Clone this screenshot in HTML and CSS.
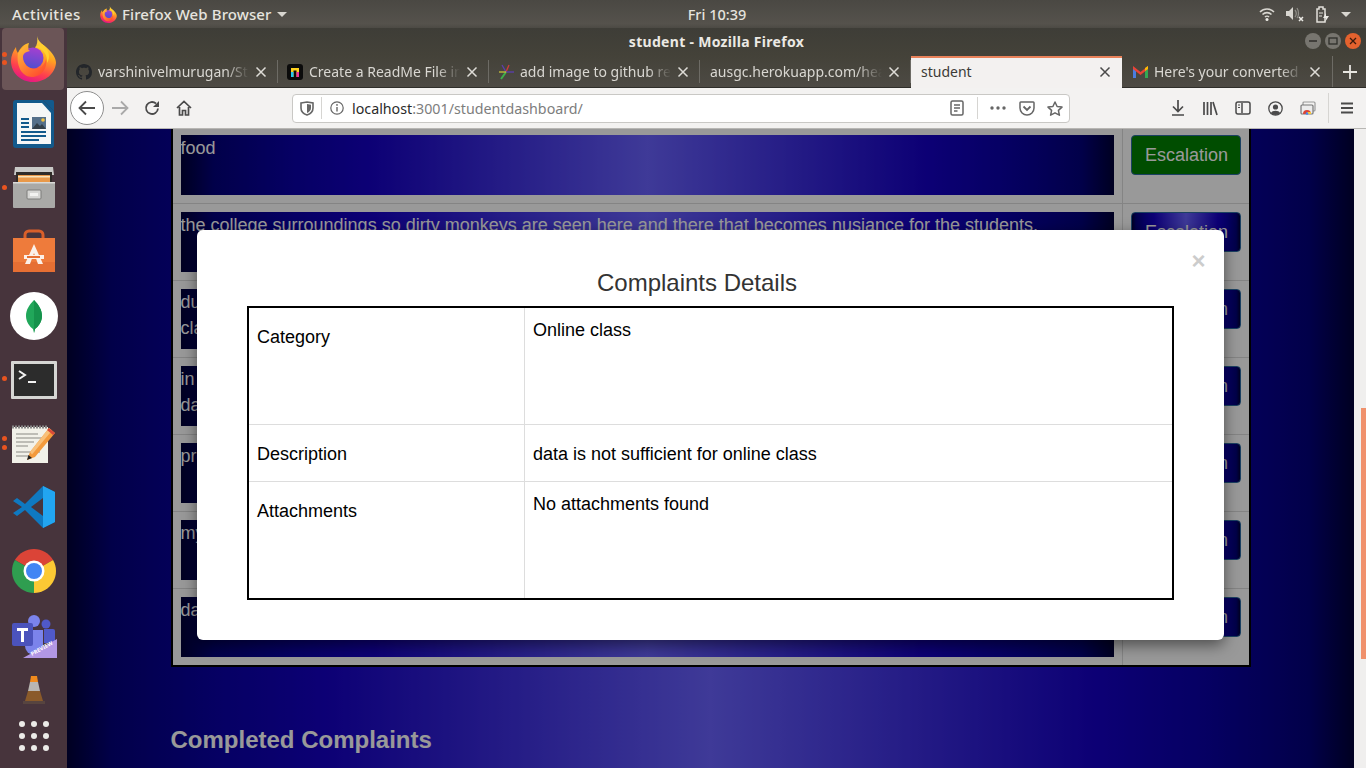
FILE: index.html
```html
<!DOCTYPE html>
<html lang="en">
<head>
    <meta charset="UTF-8">
    <title>student - Mozilla Firefox</title>
    <link rel="stylesheet" href="styles.css">
</head>
<body>
    <svg class="defs" width="0" height="0">
        <defs>
            <linearGradient id="foxOuter" x1="0.7" y1="0" x2="0.35" y2="1">
                <stop offset="0" stop-color="#ffe847"/>
                <stop offset="0.4" stop-color="#ffa51f"/>
                <stop offset="0.75" stop-color="#ff3f4e"/>
                <stop offset="1" stop-color="#e31587"/>
            </linearGradient>
            <linearGradient id="foxGlobe" x1="0.6" y1="0" x2="0.4" y2="1">
                <stop offset="0" stop-color="#a63fd0"/>
                <stop offset="1" stop-color="#4f4fd0"/>
            </linearGradient>
            <linearGradient id="foxFlame" x1="0" y1="0" x2="0.7" y2="1">
                <stop offset="0" stop-color="#ffc23a"/>
                <stop offset="1" stop-color="#ff4f2e"/>
            </linearGradient>
            <symbol id="firefox" viewBox="0 0 45 46">
                <path fill="url(#foxOuter)" d="M26 0C27 5 31 8 35 11 41 16 45 22 45 27 44 38 34 46 22 46 10 46 0 37 0 25 0 20 2 15 5 11 5 14 6 16 7 17 9 12 13 8 18 7 17 10 17 12 18 13 20 12 22 12 24 12 26 9 27 5 26 0Z"/>
                <circle cx="22" cy="22" r="10.500" fill="url(#foxGlobe)"/>
                <path fill="url(#foxFlame)" d="M7 17C9 13 13 10 17 9 16 12 17 14 19 15 14 16 12 18 12 21 12 28 18 33 24 33 30 33 34 28 35 23 37 32 30 41 21 41 11 41 5 30 7 17Z"/>
                <path fill="#ffd02e" d="M24 11C32 12 37 19 36 27 40 21 38 13 31 8 29 9 27 10 24 11Z"/>
            </symbol>
            <symbol id="ghmark" viewBox="0 0 16 16">
                <path fill-rule="evenodd" d="M8 0C3.58 0 0 3.58 0 8c0 3.54 2.29 6.53 5.47 7.59.4.07.55-.17.55-.38 0-.19-.01-.82-.01-1.49-2.01.37-2.53-.49-2.69-.94-.09-.23-.48-.94-.82-1.13-.28-.15-.68-.52-.01-.53.63-.01 1.08.58 1.23.82.72 1.21 1.87.87 2.33.66.07-.52.28-.87.51-1.07-1.78-.2-3.64-.89-3.64-3.95 0-.87.31-1.59.82-2.15-.08-.2-.36-1.02.08-2.12 0 0 .67-.21 2.2.82.64-.18 1.32-.27 2-.27.68 0 1.36.09 2 .27 1.53-1.04 2.2-.82 2.2-.82.44 1.1.16 1.92.08 2.12.51.56.82 1.27.82 2.15 0 3.07-1.87 3.75-3.65 3.95.29.25.54.73.54 1.48 0 1.07-.01 1.93-.01 2.2 0 .21.15.46.55.38A8.013 8.013 0 0016 8c0-4.42-3.58-8-8-8z"/>
            </symbol>
            <symbol id="x" viewBox="0 0 12 12">
                <path d="M1.500 1.500l9 9M10.500 1.500l-9 9" fill="none" stroke="currentColor" stroke-width="1.500"/>
            </symbol>
        </defs>
    </svg>

    <div class="topbar">
        <div class="top-left">
            <span class="activities">Activities</span>
            <svg class="top-fox" width="17" height="17"><use href="#firefox"/></svg>
            <span class="app-name">Firefox Web Browser</span>
            <span class="caret"></span>
        </div>
        <div class="clock">Fri 10:39</div>
        <div class="top-right">
            <svg class="tray" width="16" height="16" viewBox="0 0 16 16"><path d="M1 6c4-4 10-4 14 0M3.500 8.500c2.500-2.500 6.500-2.500 9 0M6 11c1-1 3-1 4 0" fill="none" stroke="#d8d6d0" stroke-width="1.600"/><circle cx="8" cy="13.500" r="1.500" fill="#ecebe6"/></svg>
            <svg class="tray tray-near" width="20" height="16" viewBox="0 0 20 16"><path d="M1 5h3l4-4v13l-4-4H1z" fill="#d8d6d0"/><path d="M10 4c1.500 2 1.500 5 0 7M12 2c2 3 2 8 0 10" fill="none" stroke="#8e8c86" stroke-width="1.300"/><path d="M14 11l4 4M18 11l-4 4" stroke="#ecebe6" stroke-width="1.500"/></svg>
            <svg class="tray" width="18" height="17" viewBox="0 0 18 17"><path d="M4 3h2V1h4v2h2v13H4z" fill="none" stroke="#e2e0da" stroke-width="1.500"/><path d="M6 7h4M6 10h3" stroke="#e2e0da" stroke-width="1.200"/><path d="M13 7l-3 5h3l-1 4 4-6h-3z" fill="#ecebe6"/></svg>
            <span class="caret"></span>
        </div>
    </div>

    <div class="desktop">
        <div class="dock">
            <div class="dock-item active">
                <span class="pip pip-a"></span><span class="pip pip-b"></span>
                <svg width="45" height="46"><use href="#firefox"/></svg>
            </div>
            <div class="dock-item">
                <svg width="42" height="50" viewBox="0 0 42 50">
                    <path d="M3 1h27l11 11v34a3 3 0 0 1-3 3H3a3 3 0 0 1-3-3V4a3 3 0 0 1 3-3z" fill="#135a8c"/>
                    <path d="M4 4h25l9 10v31H4z" fill="#f6f7f7"/>
                    <path d="M30 1h9a2 2 0 0 1 2 2v9z" fill="#135a8c"/>
                    <path d="M8 20h8M8 24h8M8 28h8M8 33h25M8 37h25M8 41h18" stroke="#135a8c" stroke-width="2"/>
                    <rect x="19" y="18" width="14" height="12" fill="#55708a"/>
                    <path d="M19 30l5-6 3 3 2-2 4 5z" fill="#33404a"/>
                    <circle cx="30" cy="21" r="1.800" fill="#f3c342"/>
                </svg>
            </div>
            <div class="dock-item nudge-up">
                <span class="pip pip-one"></span>
                <svg width="42" height="44" viewBox="0 0 42 44">
                    <path d="M2 2h38l1 8H1z" fill="#c9c9c7"/>
                    <rect x="3" y="7" width="36" height="12" fill="#2f2b28"/>
                    <rect x="5" y="10" width="32" height="8" fill="#e9994a"/>
                    <rect x="5" y="11" width="32" height="1.500" fill="#f8e2b8"/>
                    <path d="M0 17h42v25a1 1 0 0 1-1 1H1a1 1 0 0 1-1-1z" fill="#a9a9a7"/>
                    <rect x="0" y="17" width="42" height="1.500" fill="#dadad8"/>
                    <rect x="14" y="25" width="14" height="9" rx="1" fill="#d6d6d4" stroke="#7c7c7a"/>
                    <rect x="17" y="28" width="8" height="3" fill="#f2f2f0"/>
                </svg>
            </div>
            <div class="dock-item nudge-up">
                <svg width="42" height="44" viewBox="0 0 42 44">
                    <path d="M12 11V6a4 4 0 0 1 4-4h10a4 4 0 0 1 4 4v5" fill="none" stroke="#d95f2a" stroke-width="3"/>
                    <rect x="0" y="9" width="42" height="34" fill="#ee7b3b"/>
                    <rect x="0" y="33" width="42" height="10" fill="#e66f33"/>
                    <path d="M21 15l9 20h-5l-4-11-4 11h-5z" fill="#fbf0e8"/>
                    <rect x="11" y="26" width="20" height="4" fill="#fbf0e8"/>
                    <rect x="14" y="27" width="13" height="2" fill="#e66f33"/>
                </svg>
            </div>
            <div class="dock-item">
                <svg width="48" height="48" viewBox="0 0 48 48">
                    <circle cx="24" cy="24" r="24" fill="#fff"/>
                    <path d="M24 8c5 5 8 10 8 16 0 6-4 11-7 13l-1 4-1-4c-3-2-7-7-7-13 0-6 3-11 8-16z" fill="#21a75a"/>
                    <path d="M24 8c5 5 8 10 8 16 0 6-4 11-7 13l-1 4z" fill="#16924c"/>
                </svg>
            </div>
            <div class="dock-item">
                <span class="pip pip-term"></span>
                <svg width="46" height="38" viewBox="0 0 46 38">
                    <rect width="46" height="38" rx="1" fill="#d6d6d4"/>
                    <rect x="3" y="3" width="40" height="32" fill="#2c2c2c"/>
                    <path d="M8 10l6 4-6 4" fill="none" stroke="#f2f2f2" stroke-width="2"/>
                    <rect x="17" y="20" width="8" height="2" fill="#f2f2f2"/>
                </svg>
            </div>
            <div class="dock-item">
                <span class="pip pip-g1"></span><span class="pip pip-g2"></span>
                <svg width="46" height="38" viewBox="0 0 46 38">
                    <rect x="1" y="2" width="36" height="36" fill="#f2f1e9"/>
                    <path d="M1 2h36" stroke="#888" stroke-width="3" stroke-dasharray="2 1"/>
                    <path d="M5 9h22M5 13h26M5 17h18M5 21h12M5 27h24M5 31h16" stroke="#8a8a84" stroke-width="1.200"/>
                    <path d="M38 3l6 5-20 24-8 3 3-8z" fill="#f39a3c"/>
                    <path d="M38 3l3 2.500-20 24L19 27z" fill="#f8c07a"/>
                    <path d="M16 35l1.500-5 3.500 3z" fill="#222"/>
                    <path d="M38 3l6 5-2 2-6-5z" fill="#d84a3a"/>
                </svg>
            </div>
            <div class="dock-item nudge-up">
                <svg width="42" height="42" viewBox="0 0 42 42">
                    <path d="M30 0l12 6v30l-12 6L12 24l-8 6-4-3 9-6-9-6 4-3 8 6z" fill="#0f79c1"/>
                    <path d="M30 0l12 6v30l-12 6z" fill="#22a5f1"/>
                    <path d="M30 12v18l-12-9z" fill="#47343c"/>
                </svg>
            </div>
            <div class="dock-item nudge-up-more">
                <svg width="44" height="44" viewBox="0 0 44 44">
                    <path d="M22 22L2.950 11A22 22 0 0 1 41.050 11z" fill="#db4437"/>
                    <path d="M22 22L41.050 11A22 22 0 0 1 22 44z" fill="#fcc934"/>
                    <path d="M22 22L22 44A22 22 0 0 1 2.950 11z" fill="#2f9e50"/>
                    <circle cx="22" cy="22" r="10.500" fill="#fff"/>
                    <circle cx="22" cy="22" r="8" fill="#4285f4"/>
                </svg>
            </div>
            <div class="dock-item nudge-down">
                <svg width="46" height="44" viewBox="0 0 46 44">
                    <circle cx="23" cy="6" r="6" fill="#7b83eb"/>
                    <circle cx="35" cy="9" r="4.500" fill="#5059c9"/>
                    <path d="M14 15h18v16a9 9 0 0 1-18 0z" fill="#7b83eb"/>
                    <path d="M33 14h9a2 2 0 0 1 2 2v12H33z" fill="#5059c9"/>
                    <rect x="1" y="8" width="21" height="23" rx="2" fill="#4b53bc"/>
                    <path d="M6 13h11v3h-4v11h-3V16H6z" fill="#fff"/>
                    <path d="M12 43L46 24v19z" fill="#b297e4"/>
                    <text x="21" y="41" class="preview" transform="rotate(-29 21 41)">PREVIEW</text>
                </svg>
            </div>
            <div class="dock-item dock-small">
                <svg width="22" height="30" viewBox="0 0 22 30">
                    <path d="M8 1h6l1 6H7z" fill="#f08a1d"/>
                    <path d="M7 7h8l2 9H5z" fill="#b9b6b2"/>
                    <path d="M5 16h12l3 10H2z" fill="#8a5a2a"/>
                    <rect x="0" y="26" width="22" height="3" fill="#57443f"/>
                </svg>
            </div>
            <div class="dock-item dock-apps">
                <div class="apps-grid">
                    <i></i><i></i><i></i><i></i><i></i><i></i><i></i><i></i><i></i>
                </div>
            </div>
        </div>

        <div class="browser">
            <div class="titlebar">
                <span class="win-title">student - Mozilla Firefox</span>
                <div class="win-btns">
                    <span class="win-btn"><svg width="16" height="16" viewBox="0 0 16 16"><path d="M4 8h8" stroke="#2f2e2a" stroke-width="1.500"/></svg></span>
                    <span class="win-btn"><svg width="16" height="16" viewBox="0 0 16 16"><rect x="4" y="5" width="8" height="6" fill="none" stroke="#2f2e2a" stroke-width="1.300"/></svg></span>
                    <span class="win-btn close-btn"><svg width="16" height="16" viewBox="0 0 16 16"><path d="M5 5l6 6M11 5l-6 6" stroke="#3a1a0c" stroke-width="1.300"/></svg></span>
                </div>
            </div>

            <div class="tabs">
                <div class="tab">
                    <svg class="favicon gh" width="16" height="16"><use href="#ghmark"/></svg>
                    <span class="tab-title">varshinivelmurugan/Student</span>
                    <svg class="tab-x" width="12" height="12"><use href="#x"/></svg>
                </div>
                <div class="tab">
                    <svg class="favicon" width="16" height="16" viewBox="0 0 16 16"><rect width="16" height="16" rx="3" fill="#0b0b0b"/><path d="M4 13V4h8v9h-2.500V6.500h-3V13z" fill="#ffd21f"/><path d="M4 13V8h2.500v5z" fill="#25c6f0"/><path d="M9.500 13V8H12v5z" fill="#f0359a"/></svg>
                    <span class="tab-title">Create a ReadMe File in</span>
                    <svg class="tab-x" width="12" height="12"><use href="#x"/></svg>
                </div>
                <div class="tab">
                    <svg class="favicon" width="16" height="16" viewBox="0 0 16 16"><path d="M8 8L4 1" stroke="#5c3fb0" stroke-width="1.300"/><path d="M8 8l3-7" stroke="#d13b3b" stroke-width="1.300"/><path d="M8 8h8" stroke="#5c3fb0" stroke-width="1.300"/><path d="M8 8L3 15" stroke="#3fb04a" stroke-width="2"/><path d="M8 8H1" stroke="#c7c23a" stroke-width="1.300"/></svg>
                    <span class="tab-title">add image to github readme</span>
                    <svg class="tab-x" width="12" height="12"><use href="#x"/></svg>
                </div>
                <div class="tab no-icon">
                    <span class="tab-title">ausgc.herokuapp.com/health</span>
                    <svg class="tab-x" width="12" height="12"><use href="#x"/></svg>
                </div>
                <div class="tab no-icon tab-active">
                    <span class="tab-title">student</span>
                    <svg class="tab-x" width="12" height="12"><use href="#x"/></svg>
                </div>
                <div class="tab tab-last">
                    <svg class="favicon" width="15" height="12" viewBox="0 0 15 12"><path d="M0 2v10h3V5z" fill="#4a7de0"/><path d="M12 5v7h3V2z" fill="#34a853"/><path d="M0 0l7.500 6L15 0v3l-7.500 6L0 3z" fill="#ea4335"/><path d="M12 2l3-2v3l-3 2z" fill="#fbbc04"/></svg>
                    <span class="tab-title">Here's your converted file</span>
                    <svg class="tab-x" width="12" height="12"><use href="#x"/></svg>
                </div>
                <div class="new-tab">
                    <svg width="14" height="14" viewBox="0 0 14 14"><path d="M7 0v14M0 7h14" stroke="#e8e6e1" stroke-width="1.800"/></svg>
                </div>
            </div>

            <div class="toolbar">
                <span class="back-btn">
                    <svg width="18" height="16" viewBox="0 0 18 16"><path d="M17 8H2M8 1.500L1.500 8 8 14.500" fill="none" stroke="#4a4a4a" stroke-width="1.800"/></svg>
                </span>
                <svg class="forward" width="18" height="16" viewBox="0 0 18 16"><path d="M1 8h15M10 1.500L16.500 8 10 14.500" fill="none" stroke="#a9a9a9" stroke-width="1.800"/></svg>
                <svg class="reload" width="16" height="16" viewBox="0 0 16 16"><path d="M14 8.500A6 6 0 1 1 12 3.500" fill="none" stroke="#4a4a4a" stroke-width="1.800"/><path d="M15 1v6H9z" fill="#4a4a4a"/></svg>
                <svg class="home" width="16" height="16" viewBox="0 0 16 16"><path d="M1 8l7-6.500L15 8M3.500 7v8h3v-4.500h3V15h3V7" fill="none" stroke="#4a4a4a" stroke-width="1.700"/></svg>

                <div class="urlbar">
                    <svg class="shield" width="14" height="15" viewBox="0 0 14 15"><path d="M1 2l6-1 6 1v5c0 4-3 6-6 7-3-1-6-3-6-7z" fill="none" stroke="#666" stroke-width="1.600"/><path d="M7 3l4 .700V7c0 2.500-2 4-4 5z" fill="#666"/></svg>
                    <span class="url-sep"></span>
                    <svg class="info" width="14" height="14" viewBox="0 0 14 14"><circle cx="7" cy="7" r="6.200" fill="none" stroke="#666" stroke-width="1.200"/><path d="M7 6v4.500" stroke="#666" stroke-width="1.400"/><circle cx="7" cy="3.900" r="0.900" fill="#666"/></svg>
                    <span class="url-text">localhost<span class="url-dim">:3001/studentdashboard/</span></span>
                    <svg class="reader" width="14" height="16" viewBox="0 0 14 16"><rect x="1" y="1" width="12" height="14" rx="1.500" fill="none" stroke="#666" stroke-width="1.500"/><path d="M4 5h6M4 8h6M4 11h3.500" stroke="#666" stroke-width="1.300"/></svg>
                    <span class="url-sep url-sep-r"></span>
                    <svg class="dots" width="16" height="4" viewBox="0 0 16 4"><circle cx="2" cy="2" r="1.700" fill="#666"/><circle cx="8" cy="2" r="1.700" fill="#666"/><circle cx="14" cy="2" r="1.700" fill="#666"/></svg>
                    <svg class="pocket" width="16" height="15" viewBox="0 0 16 15"><path d="M1.800 1h12.400a.8.800 0 0 1 .8.800V7a7 7 0 0 1-14 0V1.800a.8.800 0 0 1 .8-.800z" fill="none" stroke="#666" stroke-width="1.500"/><path d="M4.500 5.500L8 9l3.500-3.500" fill="none" stroke="#666" stroke-width="1.800"/></svg>
                    <svg class="star" width="16" height="15" viewBox="0 0 16 15"><path d="M8 1l2.100 4.500 4.900.6-3.600 3.300 1 4.800L8 11.800l-4.400 2.400 1-4.800L1 6.100l4.900-.6z" fill="none" stroke="#666" stroke-width="1.500" stroke-linejoin="round"/></svg>
                </div>

                <div class="tools">
                    <svg width="14" height="16" viewBox="0 0 14 16"><path d="M7 0v11M2 6.500L7 11.500l5-5M1 15h12" fill="none" stroke="#4a4a4a" stroke-width="1.700"/></svg>
                    <svg width="16" height="16" viewBox="0 0 16 16"><path d="M2 2v13M5.500 2v13M9 2v13M11 2l4 13" fill="none" stroke="#4a4a4a" stroke-width="1.700"/></svg>
                    <svg width="16" height="14" viewBox="0 0 16 14"><rect x="1" y="1" width="14" height="12" rx="2" fill="none" stroke="#4a4a4a" stroke-width="1.500"/><path d="M7 2v10" stroke="#4a4a4a" stroke-width="1.500"/><path d="M3 4h2M3 6.500h2" stroke="#4a4a4a" stroke-width="1"/></svg>
                    <svg width="15" height="15" viewBox="0 0 15 15"><circle cx="7.500" cy="7.500" r="6.700" fill="none" stroke="#4a4a4a" stroke-width="1.300"/><circle cx="7.500" cy="6" r="2.600" fill="#4a4a4a"/><path d="M3 12c1-3 8-3 9 0a6 6 0 0 1-9 0z" fill="#4a4a4a"/></svg>
                    <svg width="16" height="14" viewBox="0 0 16 14"><rect x="3" y="1" width="12" height="9" rx="1" fill="none" stroke="#9a9a9a" stroke-width="1.200"/><rect x="1" y="4" width="12" height="9" rx="1" fill="#ececec" stroke="#777" stroke-width="1.200"/><path d="M3 13a4 4 0 0 1 8 0z" fill="#db4437"/><path d="M7 13V11h4v2z" fill="#fcc934"/><circle cx="7" cy="12.500" r="1.300" fill="#4285f4"/></svg>
                    <span class="tool-sep"></span>
                    <svg class="menu" width="14" height="12" viewBox="0 0 14 12"><path d="M1 1.500h12M1 6h12M1 10.500h12" stroke="#4a4a4a" stroke-width="1.800"/></svg>
                </div>
            </div>

            <div class="viewport">
                <div class="page">
                    <div class="wrap">
                        <table class="list">
                            <tr>
                                <td class="desc"><div class="grad">food</div></td>
                                <td class="act"><button class="esc esc-done">Escalation</button></td>
                            </tr>
                            <tr>
                                <td class="desc"><div class="grad">the college surroundings so dirty monkeys are seen here and there that becomes nusiance for the students.</div></td>
                                <td class="act"><button class="esc">Escalation</button></td>
                            </tr>
                            <tr>
                                <td class="desc"><div class="grad">dur<br>cla</div></td>
                                <td class="act"><button class="esc">Escalation</button></td>
                            </tr>
                            <tr>
                                <td class="desc"><div class="grad">in t<br>dat</div></td>
                                <td class="act"><button class="esc">Escalation</button></td>
                            </tr>
                            <tr>
                                <td class="desc"><div class="grad">pro</div></td>
                                <td class="act"><button class="esc">Escalation</button></td>
                            </tr>
                            <tr>
                                <td class="desc"><div class="grad">my c</div></td>
                                <td class="act"><button class="esc">Escalation</button></td>
                            </tr>
                            <tr>
                                <td class="desc"><div class="grad">dat</div></td>
                                <td class="act"><button class="esc">Escalation</button></td>
                            </tr>
                        </table>
                        <h2 class="completed">Completed Complaints</h2>
                    </div>
                </div>

                <div class="backdrop"></div>

                <div class="modal">
                    <div class="modal-head">
                        <h4 class="modal-title">Complaints Details</h4>
                        <span class="modal-close">×</span>
                    </div>
                    <table class="details">
                        <tr class="tall">
                            <td class="label">Category</td>
                            <td class="value">Online class</td>
                        </tr>
                        <tr class="short">
                            <td class="label">Description</td>
                            <td class="value mid">data is not sufficient for online class</td>
                        </tr>
                        <tr class="tall">
                            <td class="label">Attachments</td>
                            <td class="value">No attachments found</td>
                        </tr>
                    </table>
                </div>

                <div class="scrollbar"><div class="thumb"></div></div>
            </div>
        </div>
    </div>
</body>
</html>
```

FILE: styles.css
```css
:root{
    /* page gradient, undimmed (the modal backdrop darkens it) */
    --night: linear-gradient(to right, #000038, #03007b 3.500%, #0a00a7 12%, #1500c3 20%, #6961fd 50%, #1500c3 80%, #0a00a7 88%, #03007b 96.500%, #000038);
}
*{box-sizing: border-box;}
html,body{margin: 0; height: 100%; overflow: hidden;}
body{
    width: 1366px;
    height: 768px;
    display: flex;
    flex-direction: column;
    font-family: "Liberation Sans", Arial, sans-serif;
    background-color: #3c3b37;
}
.defs{position: absolute;}

/* ubuntu top bar */
.topbar{
    height: 28px;
    flex: none;
    display: grid;
    grid-template-columns: 368px 1fr 300px;
    align-items: center;
    background: linear-gradient(to bottom, #4a4843, #55524c 85%, #4c4a44);
    color: #e6e4df;
    font-family: "Noto Sans", sans-serif;
    font-size: 15px;
    font-weight: 500;
}
.top-left{display: flex; align-items: center; padding-left: 12px;}
.activities{width: 88px; letter-spacing: 0.400px;}
.top-fox{margin-right: 5px;}
.app-name{margin-right: 5px; letter-spacing: 0.100px;}
.caret{
    width: 0;
    height: 0;
    border-left: 5px solid transparent;
    border-right: 5px solid transparent;
    border-top: 5px solid #d8d6d0;
}
.clock{text-align: center; font-size: 14.500px;}
.top-right{
    display: flex;
    align-items: center;
    justify-content: flex-end;
    padding-right: 15px;
}
.tray{margin-right: 10px;}
.tray-near{margin-right: 8px;}

.desktop{flex: 1; display: flex; min-height: 0;}

/* dock */
.dock{
    width: 67px;
    flex: none;
    background-color: #47343c;
    display: flex;
    flex-direction: column;
}
.dock-item{
    position: relative;
    height: 64px;
    flex: none;
    display: flex;
    align-items: center;
    justify-content: center;
}
.dock-item.active{
    height: 62px;
    width: 62px;
    margin: 0 3px 2px 2px;
    border-radius: 4px;
    background-color: #6b5557;
}
.nudge-up svg{margin-top: -2px;}
.nudge-up-more svg{margin-top: -3px;}
.nudge-down svg{margin-top: 2px;}
.preview{
    font-family: "Noto Sans", sans-serif;
    font-size: 5.500px;
    font-weight: 700;
    fill: #fff;
}
.dock-small{height: 44px;}
.dock-apps{height: 48px;}
.apps-grid{
    display: grid;
    grid-template-columns: repeat(3, 6px);
    gap: 6px;
}
.apps-grid i{
    width: 6px;
    height: 6px;
    border-radius: 50%;
    background-color: #ecebe8;
}
.pip{
    position: absolute;
    left: 2px;
    width: 5px;
    height: 5px;
    border-radius: 50%;
    background-color: #e95420;
}
.pip-a{top: 24px; left: 0;}
.pip-b{top: 32px; left: 0;}
.pip-one{top: 29px;}
.pip-term{top: 28px;}
.pip-g1{top: 24px;}
.pip-g2{top: 33px;}

/* firefox chrome */
.browser{flex: 1; display: flex; flex-direction: column; min-width: 0;}
.titlebar{
    height: 28px;
    flex: none;
    position: relative;
    display: flex;
    align-items: center;
    justify-content: center;
    background: linear-gradient(to bottom, #3e3d37, #444239);
    color: #ebe9e4;
    font-family: "Noto Sans", sans-serif;
    font-size: 14px;
    font-weight: 700;
    letter-spacing: 0.300px;
}
.win-title{margin-top: -2px;}
.win-btns{
    position: absolute;
    right: 5px;
    top: 5px;
    display: flex;
    gap: 4px;
}
.win-btn{
    width: 16px;
    height: 16px;
    border-radius: 50%;
    background-color: #77756f;
    display: flex;
}
.close-btn{background-color: #e4622e;}
.tabs{
    height: 32px;
    flex: none;
    display: flex;
    background: linear-gradient(to bottom, #444239, #4d4a44);
    border-bottom: 1px solid #2f2e2a;
    color: #d9d7d2;
    font-family: "Noto Sans", sans-serif;
    font-size: 14px;
}
.tab{
    width: 211px;
    flex: none;
    display: flex;
    align-items: center;
    padding: 0 11px 0 9px;
    position: relative;
}
.tab:not(.tab-active):not(.tab-last)::after{
    content: "";
    position: absolute;
    right: 0;
    top: 4px;
    bottom: 4px;
    width: 1px;
    background-color: #6d6b65;
}
.no-icon{padding-left: 10px;}
.favicon{flex: none; margin-right: 6px;}
.favicon.gh{fill: #23262a;}
.tab-title{
    flex: 1;
    min-width: 0;
    overflow: hidden;
    white-space: nowrap;
    -webkit-mask-image: linear-gradient(to right, #000 85%, transparent);
    mask-image: linear-gradient(to right, #000 85%, transparent);
}
.tab-x{flex: none; margin-left: 6px; color: #dedcd7;}
.tab-active{
    background-color: #f3f1f0;
    color: #3c3b37;
    border-top: 2px solid #e9825a;
    margin-bottom: -1px;
    padding-bottom: 3px;
}
.tab-active .tab-title{-webkit-mask-image: none; mask-image: none;}
.tab-active .tab-x{color: #4a4a4a;}
.tab-last{border-right: 1px solid #6d6b65; padding-left: 11px;}
.new-tab{flex: 1; display: flex; align-items: center; justify-content: center;}

.toolbar{
    height: 41px;
    flex: none;
    display: flex;
    align-items: center;
    background-color: #f3f2f1;
    border-bottom: 1px solid #b8b7b4;
    padding-left: 3px;
}
.back-btn{
    width: 34px;
    height: 34px;
    flex: none;
    border-radius: 50%;
    background-color: #fff;
    border: 1px solid #8e8e8e;
    display: flex;
    align-items: center;
    justify-content: center;
}
.forward{margin-left: 7px;}
.reload{margin-left: 15px;}
.home{margin-left: 16px;}
.urlbar{
    width: 778px;
    height: 29px;
    flex: none;
    margin-left: 100px;
    display: flex;
    align-items: center;
    background-color: #fff;
    border: 1px solid #c9c8c5;
    border-radius: 4px;
    color: #2a2a2a;
    font-family: "Noto Sans", sans-serif;
    font-size: 14.250px;
}
.shield{margin-left: 7px;}
.url-sep{width: 1px; height: 22px; background-color: #d6d5d2; margin-left: 7px;}
.info{margin-left: 8px;}
.url-text{margin-left: 8px; flex: 1;}
.url-dim{color: #7d7d7d;}
.url-sep-r{margin-left: 13px;}
.dots{margin-left: 12px;}
.pocket{margin-left: 13px;}
.star{margin: 0 6px 0 12px;}
.tools{
    flex: 1;
    display: flex;
    align-items: center;
    gap: 17px;
    padding-left: 101px;
}
.tool-sep{width: 1px; height: 30px; background-color: #d6d5d2; margin-left: -5px;}
.menu{margin-left: -6px;}

/* page */
.viewport{
    flex: 1;
    min-height: 0;
    position: relative;
    display: flex;
    overflow: hidden;
}
.page{
    flex: 1;
    min-width: 0;
    background: var(--night);
}
.wrap{width: 1080px; margin: -4px auto 0;}
.list{
    width: 100%;
    border-collapse: separate;
    border-spacing: 0;
    border: 2px solid #000;
    background-color: #fff;
    font-size: 18px;
}
.list td{padding: 8px; border-top: 1px solid #ddd; vertical-align: top;}
.list tr:first-child td{border-top: 0;}
.desc{width: 949px;}
.act{border-left: 1px solid #ddd;}
.grad{
    height: 60px;
    line-height: 26px;
    overflow: hidden;
    color: #fff;
    background: var(--night);
}
.esc{
    display: block;
    width: 110px;
    height: 40px;
    padding: 0 0 0 2px;
    border: 1px solid #2e6da4;
    border-radius: 4px;
    color: #fff;
    font-family: inherit;
    font-size: 18px;
    background: var(--night);
}
.esc-done{background: #008000;}
.completed{
    margin: 58px 0 0;
    color: #fff;
    font-size: 24px;
    line-height: 30px;
}
.backdrop{
    position: absolute;
    inset: 0;
    background-color: rgba(0, 0, 0, 0.4);
}

/* modal */
.modal{
    position: absolute;
    left: 130px;
    top: 101px;
    width: 1027px;
    height: 410px;
    background-color: #fff;
    border-radius: 6px;
    box-shadow: 0 5px 15px rgba(0, 0, 0, 0.5);
    padding-bottom: 40px;
}
.modal-head{display: flex; padding: 16px 15px 8px;}
.modal-title{
    flex: 1;
    margin: 22px 0 0;
    text-align: center;
    font-size: 24px;
    font-weight: 400;
    line-height: 30px;
    color: #333;
}
.modal-close{
    width: 27px;
    padding-left: 6px;
    text-align: center;
    font-size: 24px;
    font-weight: 700;
    line-height: 30px;
    color: #ccc;
}
.details{
    width: 927px;
    margin: 0 50px;
    border-collapse: separate;
    border-spacing: 0;
    border: 2px solid #000;
    font-size: 18px;
    color: #000;
}
.details td{vertical-align: top; padding: 9px 8px 8px; border-top: 1px solid #ddd; line-height: 27px;}
.details tr:first-child td{border-top: 0;}
.details .label{width: 275px; padding-top: 16px;}
.details .value{border-left: 1px solid #ddd;}
.details .mid{padding-top: 16px;}
.tall td{height: 117px;}
.tall:first-child td{height: 116px;}
.short td{height: 57px;}

.scrollbar{
    width: 12px;
    flex: none;
    background-color: #f0efee;
    position: relative;
}
.thumb{
    position: absolute;
    right: 0;
    top: 279px;
    width: 5px;
    height: 251px;
    background-color: #f0916c;
}
```
